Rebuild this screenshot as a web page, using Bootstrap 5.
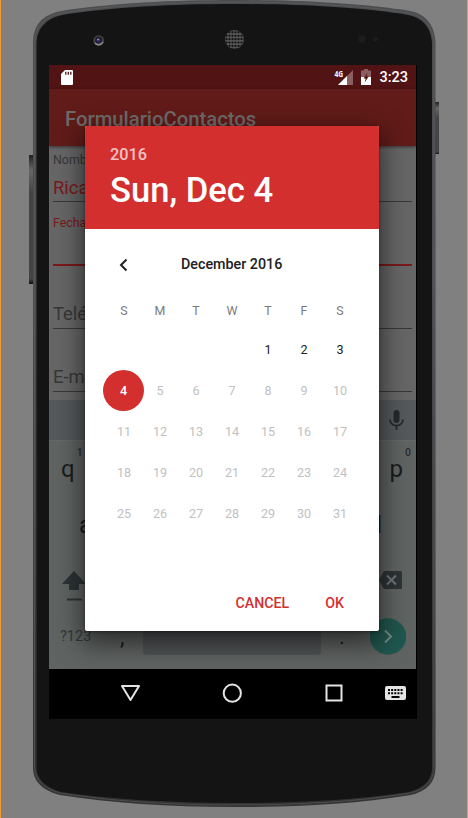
<!DOCTYPE html>
<html lang="en">
<head>
<meta charset="utf-8">
<meta name="viewport" content="width=device-width, initial-scale=1">
<title>FormularioContactos</title>
<link href="https://cdn.jsdelivr.net/npm/bootstrap@5.3.0/dist/css/bootstrap.min.css" rel="stylesheet">
<style>
body{margin:0;background:#808080;font-family:Roboto,sans-serif;overflow:hidden}
.stage{width:468px;height:818px;padding:65px 51px 0 49px}
.phone-art{left:0;top:0;z-index:0}
.screen{width:368px;height:654px;z-index:1;overflow:hidden;background:#000}
.screen>div{flex-shrink:0}
.narrow{width:367px}
.status{height:24px;background:#511314;color:#fff;font-size:14.5px;font-weight:500;padding:0 8px 0 12px}
.clock{padding-top:1px}
.net{font-family:"Open Sans",Roboto,sans-serif;font-size:8.5px;font-weight:700;line-height:9px;transform:scaleX(.78);transform-origin:right}
.appbar{height:57px;background:#611b18;color:#6f6a6a;font-size:20.3px;font-weight:500;padding:3px 16px 0;z-index:2;box-shadow:0 1px 3px rgba(0,0,0,.5)}
.form-area{height:254px;background:#666;padding:0 4px;color:#373737;line-height:1}
.field{border-bottom:1px solid #383838}
.cap{font-size:12.4px}
.val{font-size:18.4px}
.rd{color:#7a1919}
.suggest{height:41px;background:#56595b;border-bottom:1px solid #656969;padding:8px 12px 0 0}
.keys{height:228px;background:#5f6361;color:#171d21;line-height:1}
.key-l{font-size:24px}
.key-s{font-size:10.5px;font-weight:500;color:#262c2f}
.space-key{width:178px;height:34px;margin-top:-1px;background:#515456;border-radius:3px}
.navbtns{height:50px;background:#000}
.dialog{left:85px;top:126px;width:294px;height:505px;z-index:5;border-radius:2px;overflow:hidden;background:#fff}
.halo{left:36px;top:61px;width:294px;height:505px;border-radius:2px;box-shadow:0 10px 26px 3px rgba(0,0,0,.55),0 1px 3px rgba(0,0,0,.4)}
.halo-clip{left:49px;top:65px;width:367px;height:604px;z-index:3;overflow:hidden}
.dhead{height:103px;background:#d32f2f;color:#fff;padding:19px 25px 0}
.yr{font-size:16.3px;font-weight:500;line-height:19px;opacity:.7}
.dt{font-size:34.6px;font-weight:500;line-height:42px;margin-top:5px}
.month{height:69px;padding:2px 21px 0;font-size:14.3px;font-weight:500;color:#212121}
.cal{display:grid;grid-template-columns:repeat(7,36px);grid-auto-rows:41px;padding:0 21px;font-size:12.6px;color:#c1c1c1}
.cal>span{display:flex;align-items:center;justify-content:center;padding-top:1px}
.cal.week{grid-auto-rows:31px;font-size:12.4px;color:#7b7b7b}
.cal.week>span{padding:0 0 4px}
.cal .on{color:#222}
.cal .sel{width:41px;margin-left:-3px;background:#d32f2f;color:#fff;border-radius:50%;font-weight:500}
.acts{margin-top:49px;padding:0 35px;gap:36px;color:#d32f2f;font-size:14.2px;font-weight:500;line-height:40px}
</style>
<script src="https://cdn.jsdelivr.net/npm/bootstrap@5.3.0/dist/js/bootstrap.bundle.min.js"></script>
</head>
<body>
<div class="stage position-relative">
  <svg class="phone-art position-absolute" width="468" height="818" viewBox="0 0 468 818">
    <defs>
      <pattern id="mesh" width="3" height="3.400" patternUnits="userSpaceOnUse"><rect width="3" height="3.400" fill="#585858"/><circle cx="1.500" cy="1.700" r="1.150" fill="#101010"/></pattern>
      <linearGradient id="btn" x1="0" y1="0" x2="0" y2="1"><stop offset="0" stop-color="#222"/><stop offset=".12" stop-color="#666"/><stop offset=".3" stop-color="#444"/><stop offset=".96" stop-color="#444"/><stop offset="1" stop-color="#111"/></linearGradient>
      <linearGradient id="edge" x1="0" y1="0" x2="0" y2="1"><stop offset="0" stop-color="#4b4c4e"/><stop offset=".35" stop-color="#4b4b50"/><stop offset="1" stop-color="#333"/></linearGradient>
    </defs>
    <rect width="1" height="818" fill="#f39a2b"/><rect x="467" width="1" height="818" fill="#dba04f"/>
    <rect x="29" y="155" width="5" height="129" fill="url(#btn)"/>
    <rect x="434" y="102" width="5" height="52" fill="url(#btn)"/>
    <path d="M33 43C33 25 42 15 61 11C110 3 175 0 234 0S360 3 410 11C427 14 435 27 435.500 43V768C435.500 782 427 791 411 795C355 804 300 807 234 807S110 803 60 795C44 791 33 782 33 768Z" fill="url(#edge)"/>
    <path d="M34.500 44C34.500 27 43 17 62 13C110 5 175 2 234 2S360 5 409 13C425 16 433.500 28 434 44V767C434 780 426 789 410 793C355 802 300 805 234 805S110 801 60 793C45 789 34.500 780 34.500 767Z" fill="none" stroke="#6b6c6e" stroke-width=".7" opacity=".6"/>
    <path d="M36.500 44C36.500 29 45 19 62 15C110 7 175 4 234 4S360 7 408 15C424 18 431.500 29 432 44V767C432 780 424 788 409 792C355 800 300 803 234 803S110 799 61 792C47 788 36.500 780 36.500 767Z" fill="#141414"/>
    <circle cx="98.700" cy="40.500" r="5.300" fill="#484848"/><circle cx="98.700" cy="40" r="3.600" fill="#1d1d28"/><circle cx="98.500" cy="40" r="2" fill="#303080"/><circle cx="98" cy="39.500" r=".8" fill="#aab"/><path d="M95 43Q99 47 103 42" fill="none" stroke="#888" stroke-width="1.500"/>
    <circle cx="234.500" cy="39.500" r="9.500" fill="url(#mesh)"/>
    <circle cx="362" cy="39" r="4" fill="#1d1a1b"/><circle cx="375.500" cy="39" r="2.500" fill="#1e1c1c"/>
  </svg>

  <div class="screen position-relative d-flex flex-column">
    <div class="status narrow d-flex align-items-center">
      <svg width="12" height="15" viewBox="0 0 12 15"><path d="M4 0H11Q12 0 12 1V14Q12 15 11 15H1Q0 15 0 14V4Z" fill="#fff"/><path d="M4.800 1.800v3M7.300 1.800v3M9.800 1.800v3" stroke="#511314" stroke-width="1.300"/></svg>
      <span class="net ms-auto align-self-start pt-1">4G</span>
      <svg style="margin-left:-5px" width="15" height="15" viewBox="0 0 15 15"><path d="M15 0V15H0Z" fill="#8b5f60"/><path d="M9 6V15H0Z" fill="#fff"/></svg>
      <svg class="mx-2" width="10" height="16" viewBox="0 0 10 16"><path d="M3 0H7V1.500H10V8H0V1.500H3Z" fill="#8b5f60"/><path d="M0 8H10V16H0Z" fill="#fff"/><path d="M6.500 3.500L2.500 9.500H4.700L3.700 13.500L7.700 7.500H5.500Z" fill="#511314"/></svg>
      <span class="clock">3:23</span>
    </div>
    <div class="appbar narrow d-flex align-items-center position-relative">FormularioContactos</div>
    <div class="form-area narrow">
      <div class="field" style="height:56px"><div class="cap" style="padding-top:8px">Nomb</div><div class="val rd" style="padding-top:13px">Rica</div></div>
      <div class="field" style="height:64px;border-color:#7a1919;border-bottom-width:2px"><div class="cap rd" style="padding-top:15px">Fecha</div></div>
      <div class="field" style="height:63px"><div class="val" style="padding-top:39px">Telé</div></div>
      <div class="field" style="height:63px"><div class="val" style="padding-top:39px">E-m</div></div>
    </div>
    <div class="suggest narrow d-flex justify-content-end">
      <svg width="15" height="23" viewBox="0 0 15 23"><rect x="4.500" y="2" width="6" height="13" rx="3" fill="#24292c"/><path d="M1 11.500A6.500 6.200 0 0 0 14 11.500M7.500 18V22" stroke="#24292c" stroke-width="1.800" fill="none"/></svg>
    </div>
    <div class="keys narrow d-flex flex-column">
      <div class="d-flex justify-content-between" style="height:72px;padding:7px 5px 0 12px">
        <div class="d-flex"><span class="key-l" style="padding-top:9px">q</span><span class="key-s" style="padding-left:2px">1</span></div>
        <div class="d-flex"><span class="key-l" style="padding-top:9px">p</span><span class="key-s" style="padding-left:2px">0</span></div>
      </div>
      <div class="d-flex justify-content-between" style="height:57px;padding:0 34px 0 30px"><span class="key-l">a</span><span class="key-l">l</span></div>
      <div class="d-flex justify-content-between" style="height:52px;padding:0 14px 0 13px">
        <svg width="24" height="31" viewBox="0 0 24 31"><path d="M12 1L24 14H17V20H7V14H0Z" fill="#2d3436"/><path d="M5 29.500H20" stroke="#2d3436" stroke-width="2"/></svg>
        <svg width="23" height="20" viewBox="0 0 23 20"><path d="M6 1H21.500Q23 1 23 2.500V17.500Q23 19 21.500 19H6Q5 19 4.300 18L0 10L4.300 2Q5 1 6 1Z" fill="#2d3436"/><path d="M8 5.500L17 14.500M17 5.500L8 14.500" stroke="#747776" stroke-width="2"/></svg>
      </div>
      <div class="d-flex" style="height:47px;padding:0 10px 0 11px">
        <span style="font-size:14.5px;padding-top:8px;color:#32383b;width:60px">?123</span><span style="font-size:23px;width:23px;padding-top:4px">,</span>
        <span class="space-key"></span><span style="font-size:22px;padding:4px 0 0 18px">.</span>
        <svg class="ms-auto" style="margin-top:-4px" width="36" height="37" viewBox="0 0 36 37"><circle cx="18" cy="18.500" r="18.200" fill="#20574e"/><path d="M15 12.500L21 18.500L15 24.500" fill="none" stroke="#778b87" stroke-width="2"/></svg>
      </div>
    </div>
    <div class="navbtns d-flex align-items-center">
      <svg width="368" height="50" viewBox="0 0 368 50" fill="none" stroke="#e4e4e4" stroke-width="2"><path d="M73 17H90L81.500 31Z" stroke-linejoin="round"/><circle cx="183.300" cy="24.200" r="8.600"/><rect x="277.500" y="16.500" width="15" height="15"/><rect x="336" y="17" width="21" height="14" rx="2" fill="#e4e4e4" stroke="none"/><path d="M339 21H354M339 24.200H354" stroke="#000" stroke-dasharray="2 1.150"/><path d="M342.500 28H350.500" stroke="#000"/></svg>
    </div>
  </div>

  <div class="halo-clip position-absolute"><div class="halo position-absolute"></div></div>

  <div class="dialog position-absolute">
    <div class="dhead"><div class="yr">2016</div><div class="dt">Sun, Dec 4</div></div>
    <div class="month d-flex align-items-center">
      <svg style="margin:0 52px 0 12px" width="11" height="14" viewBox="0 0 10 14"><path d="M8 1.500L2.500 7L8 12.500" fill="none" stroke="#212121" stroke-width="2"/></svg>
      <span>December 2016</span>
    </div>
    <div class="cal week"><span>S</span><span>M</span><span>T</span><span>W</span><span>T</span><span>F</span><span>S</span></div>
    <div class="cal">
      <span></span><span></span><span></span><span></span><span class="on">1</span><span class="on">2</span><span class="on">3</span>
      <span class="sel">4</span><span>5</span><span>6</span><span>7</span><span>8</span><span>9</span><span>10</span>
      <span>11</span><span>12</span><span>13</span><span>14</span><span>15</span><span>16</span><span>17</span>
      <span>18</span><span>19</span><span>20</span><span>21</span><span>22</span><span>23</span><span>24</span>
      <span>25</span><span>26</span><span>27</span><span>28</span><span>29</span><span>30</span><span>31</span>
    </div>
    <div class="acts d-flex justify-content-end"><span>CANCEL</span><span>OK</span></div>
  </div>
</div>
</body>
</html>
